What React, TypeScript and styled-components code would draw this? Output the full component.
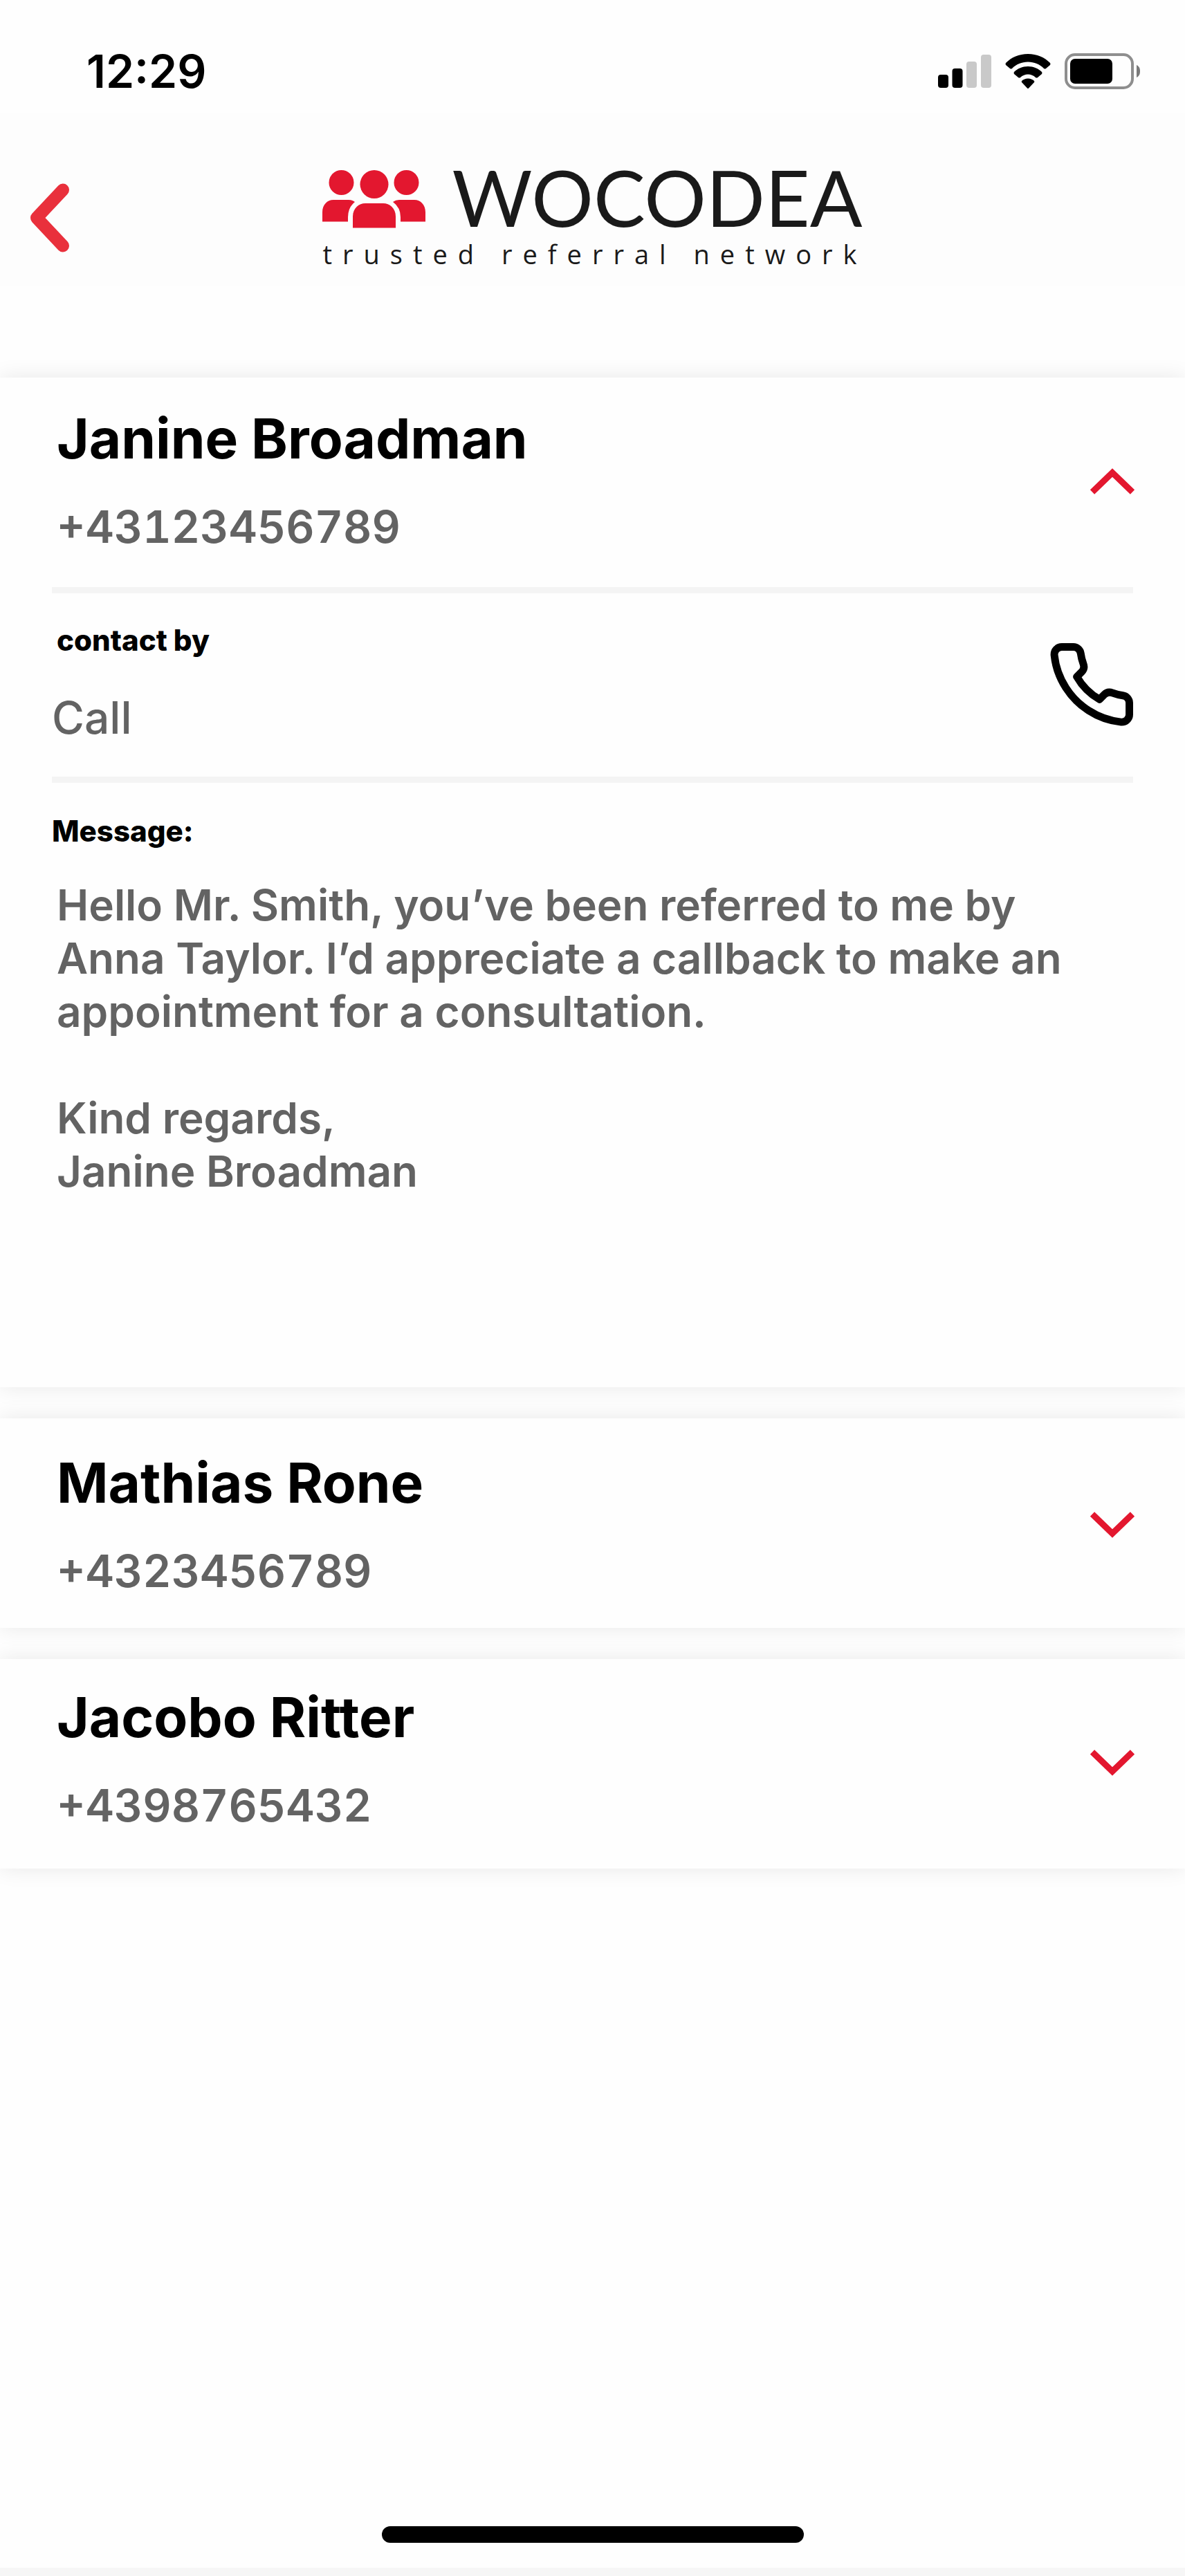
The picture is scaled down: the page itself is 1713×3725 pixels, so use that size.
import React, { useState } from "react";
import styled, { createGlobalStyle } from "styled-components";

const Global = createGlobalStyle`
  *, *::before, *::after { box-sizing: border-box; }
  body { margin: 0; background: #fefefe; font-family: Inter, "Liberation Sans", sans-serif; }
  h1, h2, h3, p { margin: 0; }
  button { font: inherit; color: inherit; background: none; border: 0; padding: 0; text-align: left; cursor: pointer; }
`;

const Screen = styled.div`
  display: flex;
  flex-direction: column;
  min-height: 100vh;
  overflow: hidden;
  border-bottom: 12px solid #f6f6f6;
`;

const StatusBar = styled.header`
  display: flex;
  justify-content: space-between;
  align-items: center;
  height: 163px;
  padding: 43px 64px 0 125px;
`;

const Clock = styled.time`
  font-size: 66px;
  line-height: 80px;
  font-weight: 600;
`;

const StatusIcons = styled.div`
  display: flex;
  align-items: center;
  gap: 20px;
`;

const TopBar = styled.div`
  display: grid;
  grid-template-columns: 1fr auto 1fr;
  align-items: start;
  height: 250px;
  padding: 0 40px;
  background: #fdfdfd;
`;

const BackButton = styled.button`
  display: flex;
  width: 64px;
  margin-top: 102px;
`;

const Logo = styled.div`
  display: flex;
  flex-direction: column;
  margin-top: 68px;
  color: #1a1a1a;
  font-family: Lato, "Open Sans", sans-serif;
`;

const LogoTop = styled.div`
  display: flex;
  align-items: flex-start;
  gap: 37px;
`;

const Brand = styled.h1`
  font-size: 112px;
  line-height: 108px;
  font-weight: 400;
`;

const Tagline = styled.p`
  margin-right: -15px;
  font-family: "Open Sans", "Noto Sans", sans-serif;
  font-size: 38px;
  line-height: 56px;
  font-weight: 400;
  letter-spacing: 15px;
`;

const List = styled.main`
  display: flex;
  flex-direction: column;
  gap: 45px;
  flex: 1;
  padding-top: 133px;
`;

const Card = styled.article`
  background: #fefefe;
  box-shadow: 0 0 30px rgba(0, 0, 0, 0.09);
`;

const CardHead = styled.button<{ $top: number }>`
  display: flex;
  justify-content: space-between;
  align-items: flex-start;
  width: 100%;
  height: 303px;
  padding: ${(p) => p.$top}px 72px 0 82px;
`;

const HeadText = styled.span`
  display: flex;
  flex-direction: column;
  gap: 36px;
`;

const Name = styled.span`
  font-size: 80px;
  line-height: 96px;
  font-weight: 700;
  color: #000;
`;

const Phone = styled.span`
  font-size: 64px;
  line-height: 88px;
  font-weight: 600;
  font-variant-numeric: tabular-nums;
  color: #636363;
`;

const Chevron = styled.svg<{ $open: boolean }>`
  align-self: center;
  margin-top: ${(p) => (p.$open ? -44 : -40)}px;
  transform: ${(p) => (p.$open ? "none" : "scaleY(-1)")};
`;

const Details = styled.div`
  padding: 0 75px;
`;

const ContactRow = styled.section`
  display: flex;
  justify-content: space-between;
  align-items: flex-start;
  height: 283px;
  padding-top: 40px;
  border-top: 9px solid #f4f4f4;
  border-bottom: 9px solid #f4f4f4;
`;

const Label = styled.h3<{ $inset?: boolean }>`
  font-size: 42px;
  line-height: 56px;
  font-weight: 800;
  padding-left: ${(p) => (p.$inset ? 7 : 0)}px;
`;

const Method = styled.p`
  margin-top: 40px;
  font-size: 64px;
  line-height: 88px;
  font-weight: 500;
  color: #636363;
`;

const CallButton = styled.button`
  display: flex;
  margin-top: 32px;
`;

const Message = styled.section`
  height: 874px;
  padding-top: 42px;
`;

const MessageText = styled.p`
  margin-top: 40px;
  padding-left: 7px;
  font-size: 62px;
  line-height: 77px;
  font-weight: 600;
  color: #636363;
  white-space: pre-line;
`;

const HomeArea = styled.footer`
  display: flex;
  justify-content: center;
  padding-bottom: 36px;
`;

const HomeBar = styled.div`
  width: 36%;
  max-width: 610px;
  height: 24px;
  border-radius: 12px;
  background: #000;
`;

type Contact = {
  name: string;
  phone: string;
  top: number;
  method: string;
  message: string;
};

const contacts: Contact[] = [
  {
    name: "Janine Broadman",
    phone: "+43123456789",
    top: 40,
    method: "Call",
    message:
      "Hello Mr. Smith, you’ve been referred to me by\nAnna Taylor. I’d appreciate a callback to make an\nappointment for a consultation.\n\nKind regards,\nJanine Broadman",
  },
  { name: "Mathias Rone", phone: "+4323456789", top: 45, method: "Call", message: "" },
  { name: "Jacobo Ritter", phone: "+4398765432", top: 36, method: "Call", message: "" },
];

const Signal = () => (
  <svg width="77" height="50" viewBox="0 0 77 50" aria-hidden="true">
    <rect x="0" y="30" width="15" height="19" rx="4" />
    <rect x="20.500" y="21" width="15" height="28" rx="4" />
    <rect x="41" y="11" width="15" height="38" rx="4" fill="#c9c9c9" />
    <rect x="62" y="1" width="15" height="48" rx="4" fill="#c9c9c9" />
  </svg>
);

const Wifi = () => (
  <svg width="66" height="50" viewBox="0 0 66 50" aria-hidden="true">
    <path d="M33 0C46 0 57 5 65 13Q66 14.500 65 16L59 21Q57.500 22 56 21C50 15 42 11.500 33 11.500S16 15 10 21Q8.500 22 7 21L1 16Q0 14.500 1 13C9 5 20 0 33 0Z" />
    <path d="M33 18C41 18 48 21 53 26Q54 27.500 53 29L47 34Q45.500 35 44 34C41 31 37 29.500 33 29.500S25 31 22 34Q20.500 35 19 34L13 29Q12 27.500 13 26C18 21 25 18 33 18Z" />
    <path d="M33 35.500C36.500 35.500 39.500 37 42 39Q42.500 40 42 41L34 49.500Q33 50.500 32 49.500L24 41Q23.500 40 24 39C26.500 37 29.500 35.500 33 35.500Z" />
  </svg>
);

const Battery = () => (
  <svg width="110" height="52" viewBox="0 0 110 52" aria-hidden="true">
    <rect x="2" y="2" width="96" height="48" rx="13" fill="none" stroke="#8e8e8e" strokeWidth="4" />
    <rect x="8" y="8" width="61" height="36" rx="7" />
    <path d="M104 17C108 19 109 22 109 26S108 33 104 35Z" fill="#7a7a7a" />
  </svg>
);

const PeopleIcon = styled.svg`
  margin-top: 14px;
`;

const People = () => (
  <PeopleIcon width="150" height="86" viewBox="0 0 150 86" fill="#e3172f" aria-hidden="true">
    <circle cx="27.500" cy="19" r="18" />
    <circle cx="121.500" cy="19" r="18" />
    <circle cx="75" cy="21.500" r="20.500" />
    <path d="M0 75.500V62C0 51 7 44 16 44H38Q43 44 47 47Q37 55 37 69V75.500Z" />
    <path d="M149 75.500V62C149 51 142 44 133 44H111Q106 44 102 47Q113 55 113 69V75.500Z" />
    <path d="M44 84.500V68C44 56 53 49 62 49H88C97 49 106 56 106 68V84.500Z" />
  </PeopleIcon>
);

function ContactCard({ contact, open, onToggle }: { contact: Contact; open: boolean; onToggle: () => void }) {
  return (
    <Card>
      <CardHead $top={contact.top} aria-expanded={open} onClick={onToggle}>
        <HeadText>
          <Name>{contact.name}</Name>
          <Phone>{contact.phone}</Phone>
        </HeadText>
        <Chevron $open={open} width="66" height="38" viewBox="0 0 66 38" fill="none" stroke="#e3172f" strokeWidth="9" aria-hidden="true">
          <path d="M4 34.500L33 6.500L62 34.500" />
        </Chevron>
      </CardHead>
      {open && (
        <Details>
          <ContactRow>
            <div>
              <Label $inset>contact by</Label>
              <Method>{contact.method}</Method>
            </div>
            <CallButton aria-label={"Call " + contact.name}>
              <svg width="120" height="120" viewBox="1 1 22 22" fill="none" stroke="#000" strokeWidth="2" strokeLinecap="round" strokeLinejoin="round">
                <path d="M22 16.920v3a2 2 0 0 1-2.180 2 19.790 19.790 0 0 1-8.630-3.070 19.500 19.500 0 0 1-6-6 19.790 19.790 0 0 1-3.070-8.670A2 2 0 0 1 4.110 2h3a2 2 0 0 1 2 1.720 12.840 12.840 0 0 0 .7 2.810 2 2 0 0 1-.45 2.110L8.090 9.910a16 16 0 0 0 6 6l1.270-1.270a2 2 0 0 1 2.110-.45 12.840 12.840 0 0 0 2.810.7A2 2 0 0 1 22 16.920z" />
              </svg>
            </CallButton>
          </ContactRow>
          <Message>
            <Label>Message:</Label>
            <MessageText>{contact.message}</MessageText>
          </Message>
        </Details>
      )}
    </Card>
  );
}

export default function App() {
  const [openIndex, setOpenIndex] = useState(0);
  return (
    <>
      <Global />
      <Screen>
        <StatusBar>
          <Clock>12:29</Clock>
          <StatusIcons>
            <Signal />
            <Wifi />
            <Battery />
          </StatusIcons>
        </StatusBar>
        <TopBar>
          <BackButton aria-label="Back">
            <svg width="64" height="100" viewBox="0 0 64 100" fill="none" stroke="#e9303c" strokeWidth="18" strokeLinecap="round" strokeLinejoin="round">
              <path d="M51 9.500L13 50L51 90.500" />
            </svg>
          </BackButton>
          <Logo>
            <LogoTop>
              <People />
              <Brand>WOCODEA</Brand>
            </LogoTop>
            <Tagline>trusted referral network</Tagline>
          </Logo>
        </TopBar>
        <List>
          {contacts.map((c, i) => (
            <ContactCard
              key={c.name}
              contact={c}
              open={openIndex === i}
              onToggle={() => setOpenIndex(openIndex === i ? -1 : i)}
            />
          ))}
        </List>
        <HomeArea>
          <HomeBar />
        </HomeArea>
      </Screen>
    </>
  );
}
